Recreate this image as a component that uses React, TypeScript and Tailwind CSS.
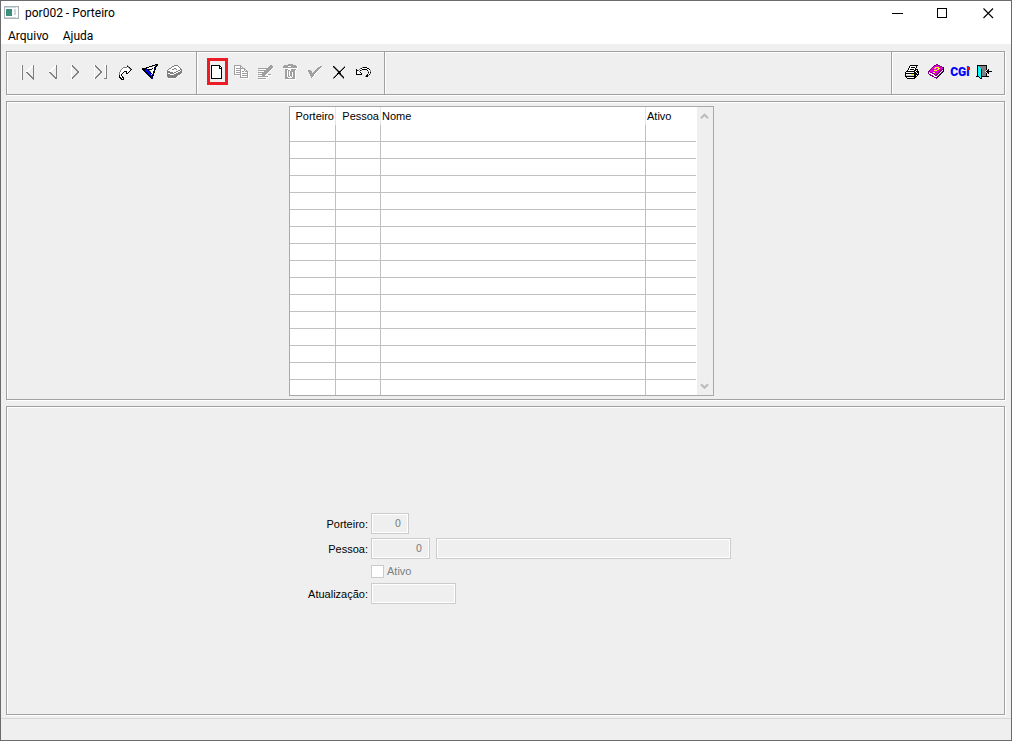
import type { ReactNode } from "react";

// One character per pixel, "." is transparent
const palette: Record<string, string> = {
    k: "#000000",
    g: "#808080",
    a: "#a0a0a0",
    l: "#c4c4c4",
    w: "#ffffff",
    b: "#0000ff",
    n: "#000080",
    c: "#00ffff",
    m: "#e000e0",
    p: "#800080",
    y: "#ffff00",
};

const icons = {
    first: [
        "",
        "",
        "...wg.........wg",
        "...wg........wwg",
        "...wg.......ww.g",
        "...wg......ww..g",
        "...wg.....ww...g",
        "...wg....ww....g",
        "...wg...ww.....g",
        "...wg...gg.....g",
        "...wg....gg....g",
        "...wg.....gg...g",
        "...wg......gg..g",
        "...wg.......gg.g",
        "...wg........ggg",
        "...wg.........gg",
        "....g..........g",
    ],
    prev: [
        "",
        "",
        "............wg",
        "...........wwg",
        "..........ww.g",
        ".........ww..g",
        "........ww...g",
        ".......ww....g",
        "......ww.....g",
        "......gg.....g",
        ".......gg....g",
        "........gg...g",
        ".........gg..g",
        "..........gg.g",
        "...........ggg",
        "............gg",
    ],
    next: [
        "",
        "",
        "....wg",
        "....wgg",
        "....w.gg",
        "....w..gg",
        "....w...gg",
        "....w....gg",
        "....w.....gg",
        "....w.....gg",
        "....w....gg",
        "....w...gg",
        "....w..gg",
        "....w.gg",
        "....wgg",
        "....wg",
    ],
    last: [
        "",
        "",
        "..wg........wwg",
        "..wgg........wg",
        "..w.gg.......wg",
        "..w..gg......wg",
        "..w...gg.....wg",
        "..w....gg....wg",
        "..w.....gg...wg",
        "..w.....gg...wg",
        "..w....gg....wg",
        "..w...gg.....wg",
        "..w..gg......wg",
        "..w.gg.......wg",
        "..wgg........wg",
        "..wg........ggg",
    ],
    redo: [
        "",
        "",
        "..........g",
        "..........kg",
        "......ggggwgk",
        ".....gwwwwwwgk",
        "....gwwwwwwwwgk",
        "...gwwwwwwwwwk",
        "...gwwwkkkwwk",
        "..gwwwk..kwk",
        "..gwwk...kk",
        "..gwk",
        "..kwk",
        "..kwwk",
        "..kkwkk",
        "...kkwk",
        "....kkk",
    ],
    filter: [
        "",
        "..............kkk",
        "...........kkkgkn",
        "........kkkgwwkk",
        ".....kkkwwwwwkk",
        ".kkkkkwwwwwkwnk",
        ".kkkbbkkkkkwwkk",
        "..kkbbbkgwwwwk",
        "...kkbbbkgwwnk",
        "....kkbbbkwwkk",
        ".....kkbbbkwk",
        "......kkbbwnk",
        ".......kkbbkk",
        "........kkbk",
        ".........kbn",
        "..........nn",
    ],
    eraser: [
        "",
        "",
        "........gggg",
        "......ggwwwwg",
        ".....gwwwwwwwg",
        "...ggwwwggwwwwg",
        "..gwwwgg..gwwwgg",
        ".gwwwwwwwwwwggwg",
        ".gggwwwwwwggwwgg",
        ".ggggggwggwwgggg",
        ".gwwggggwwggggg",
        ".gggwwwwggggggw",
        ".gggggggggggww",
        ".ggggggggggw",
        "..ggggggggw",
        "...wwwwwww",
    ],
    blank: [
        "",
        "",
        "...kkkkkkkkk",
        "...kwwwwwwwkk",
        "...kwwwwwwwkwk",
        "...kwwwwwwwkkk",
        "...kwwwwwwwwwk",
        "...kwwwwwwwwwk",
        "...kwwwwwwwwwk",
        "...kwwwwwwwwwk",
        "...kwwwwwwwwwk",
        "...kwwwwwwwwwk",
        "...kwwwwwwwwwk",
        "...kwwwwwwwwwk",
        "...kwwwwwwwwwk",
        "...kkkkkkkkkkk",
    ],
    copy: [
        "",
        "",
        ".aaaaaaa",
        ".awwwwwaa",
        ".awwwwwawa",
        ".awaaaaaaaaa",
        ".awwwwwawwwaaw",
        ".awaaaaawwwawa",
        ".awwwwwawaawaaa",
        ".awaaaaawwwwwwaw",
        ".awwwwwawaaaaaaw",
        ".aaaaaaawwwwwwaw",
        "..wwwwwawaaaaaaw",
        ".......awwwwwwaw",
        ".......aaaaaaaaw",
        "........wwwwwwww",
    ],
    edit: [
        "",
        "",
        ".............aa",
        "............aaaa",
        "...........aaaaaw",
        ".aaaaaaaaaaaaaaw",
        "..wwwwwwwaaaaaw",
        ".aaaaaaaaaaaaw",
        "..wwwwwaaaaaw",
        ".aaaaaaaaaaw",
        "..wwwaaaaaw",
        ".aaaaaaaawwaaa",
        "..wwwaaawwwwwww",
        ".aaaaaaaaaaw",
        "..wwwwwwwwww",
        ".aaaaaaaaw",
        "..wwwwwwww",
    ],
    trash: [
        "",
        "......aaaaa",
        "..aaaaaaaaaaaa",
        ".aaaaawwwaaaaaaw",
        ".aaaaaaaaaaaaaaw",
        "..wwwwwwwwwwwwww",
        "...aaawwwaaaaaw",
        "...aawaawaaaaw",
        "...aawawaaaaaw",
        "...aawawaawaaw",
        "...aawawaawaaw",
        "...aawawaawaaw",
        "...aawawaawaaw",
        "...aawaawawaaw",
        "...aaawwwwaaaw",
        "...aaaaaaaaaaw",
        "....wwwwwwwwww",
    ],
    check: [
        "",
        "",
        "",
        "..............aa",
        "............aaaw",
        "...........aaaw",
        "..........aaaw",
        "..aaa....aaaw",
        "..aaaa..aaaw",
        "...aaa.aaaw",
        "...aaaaaaw",
        "....aaaaw",
        "....aaaaw",
        ".....aaw",
        ".....aw",
    ],
    cancel: [
        "",
        "",
        "",
        "..kg.........g",
        "..gkg.......gk",
        "...gkg.....gk",
        "....gkg...gk",
        ".....gkg.gk",
        "......gkkk",
        ".......kkg",
        "......kkkk",
        ".....gk.gkg",
        "....gk...gkg",
        "...gk.....gkg",
        "..gk.......gk",
        "..g.........g",
    ],
    undo: [
        "",
        "",
        "",
        "",
        ".......gkkkk",
        ".....gkwwwwwkk",
        ".k..gwwkkkkkwwk",
        ".kkgwkg.....kwwg",
        ".kwwg........gwg",
        ".kwwwk.......kwk",
        ".kwwwwk......gwg",
        ".kkkkkk.....kwk",
        "...........kkg",
        "..........gkk",
    ],
    print: [
        "",
        "",
        "......kkkkkkkk",
        ".....kwwwwwwk",
        ".....kwkkkkwk",
        "....kwwwwwwk",
        "....kwkkkkwkkk",
        "...kwwwwwwkkwk",
        "..kkkkkkkkkwkkk",
        ".kwwwwwwwwkkwkk",
        ".kkkkkkkkkkkkwk",
        ".kwwwwwyywkkkkk",
        ".kllllllllkkwk",
        ".kkkkkkkkkkkk",
        "..kwwwwwwwkk",
        "...kkkkkkkk",
    ],
    help: [
        "",
        "........pp",
        "......ppmmpp",
        ".....pmmmmmmpp",
        "....pmmyyyymmmpk",
        "...pmmyymmyymmmk",
        "..pmmmmmmyymmppk",
        ".pmmmmyyymmmppwk",
        "ppmmmmmmmmmppwpk",
        "pwppmyymmmppwpk",
        "pwwwppmmmppwpk",
        ".ppwwwpmppwpk",
        "..pppwwppwpk",
        "....ppwwwpk",
        "......pppk",
        "........p",
    ],
    exit: [
        "",
        "",
        "..kkkkkkkkkk",
        "..kcgggggggk",
        "..kccggggggk",
        "..kcccgggggk",
        "..kccckggggk.k",
        "..kccckgggg.kk",
        "..kccckggg.kkkkkk",
        "..kccckgggg.kk",
        "..kccckggggk.k",
        "..kccckggggk",
        "..kccckggggk",
        ".kkkcckkkkkkkk",
        "....kck",
        ".....kk",
    ],
    app: [
        "",
        "aaaaaaaaaaaaaaa",
        "alllllllllllwla",
        "awwwwwwwwwwwwwa",
        "awggggggwwllwwa",
        "awgggggnwwllwwa",
        "awggggggwwllwwa",
        "awggggggwwllwwa",
        "awggggggwwllwwa",
        "awggggggwwllwwa",
        "awggggggwwwwwwa",
        "awwwwwwwwwwwwwa",
        "alllllllllllwla",
        "aaaaaaaaaaaaaaa",
    ],
};

type IconName = keyof typeof icons;

function PixelIcon({ name, colors = palette }: { name: IconName; colors?: Record<string, string> }) {
    return (
        <svg
            className="h-[17px] w-[17px] shrink-0"
            viewBox="0 0 17 17"
            shapeRendering="crispEdges"
            aria-hidden="true"
        >
            {icons[name].flatMap((row, y) =>
                [...row].map((char, x) =>
                    char === "." ? null : (
                        <rect key={`${x}-${y}`} x={x} y={y} width="1" height="1" fill={colors[char]} />
                    )
                )
            )}
        </svg>
    );
}

const appColors = { ...palette, g: "#3f8f80", n: "#3f6fa8", a: "#a9b4b8", l: "#cfd8dc" };

interface ToolButtonProps {
    label: string;
    highlighted?: boolean;
    children: ReactNode;
}

function ToolButton({ label, highlighted, children }: ToolButtonProps) {
    return (
        <button
            type="button"
            title={label}
            aria-label={label}
            className={`flex h-[27px] w-[21px] shrink-0 items-center justify-center pr-[2px] ${
                highlighted ? "shadow-[inset_0_0_0_3px_#ed1c24]" : ""
            }`}
        >
            {children}
        </button>
    );
}

const navigation: { icon: IconName; label: string }[] = [
    { icon: "first", label: "Primeiro" },
    { icon: "prev", label: "Anterior" },
    { icon: "next", label: "Próximo" },
    { icon: "last", label: "Último" },
    { icon: "redo", label: "Ir para" },
    { icon: "filter", label: "Filtrar" },
    { icon: "eraser", label: "Limpar filtro" },
];

const editing: { icon: IconName; label: string }[] = [
    { icon: "blank", label: "Novo" },
    { icon: "copy", label: "Copiar" },
    { icon: "edit", label: "Alterar" },
    { icon: "trash", label: "Excluir" },
    { icon: "check", label: "Confirmar" },
    { icon: "cancel", label: "Cancelar" },
    { icon: "undo", label: "Desfazer" },
];

const etched = "border border-[#a0a0a0] shadow-[1px_1px_0_#fff,inset_1px_1px_0_#fff]";
const field =
    "h-[21px] border border-[#cccccc] bg-[#efefef] px-[7px] text-right font-['DejaVu_Sans',sans-serif] text-[10px] text-[#808080] shadow-[inset_0_0_0_1px_#fff] outline-none";

function TitleBar() {
    return (
        <header className="bg-white font-[Roboto,sans-serif] text-xs text-black">
            <div className="flex h-6 items-center">
                <div className="flex flex-1 items-center gap-1 pl-[3px]">
                    <PixelIcon name="app" colors={appColors} />
                    <h1>por002 - Porteiro</h1>
                </div>
                <div className="flex">
                    <button type="button" aria-label="Minimizar" className="flex w-[46px] justify-center">
                        <svg className="size-[11px]" viewBox="0 0 11 11" shapeRendering="crispEdges">
                            <path d="M0 5.5h11" stroke="#000" />
                        </svg>
                    </button>
                    <button type="button" aria-label="Maximizar" className="flex w-[45px] justify-center">
                        <svg className="size-[11px]" viewBox="0 0 11 11" shapeRendering="crispEdges">
                            <path d="M.5 .5h9v9h-9z" fill="none" stroke="#000" />
                        </svg>
                    </button>
                    <button type="button" aria-label="Fechar" className="flex w-[46px] justify-center">
                        <svg className="size-[11px]" viewBox="0 0 11 11">
                            <path d="M.5 .5l9.500 9.500M10 .5l-9.500 9.500" stroke="#000" strokeWidth="1.1" />
                        </svg>
                    </button>
                </div>
            </div>
            <nav className="flex h-[19px] items-end gap-[14px] pl-[7px]">
                <button type="button">Arquivo</button>
                <button type="button">Ajuda</button>
            </nav>
        </header>
    );
}

function Toolbar() {
    return (
        <div role="toolbar" className={`flex ${etched}`}>
            <div className="flex w-[190px] justify-between border-r border-[#a0a0a0] pt-[6px] pr-[10px] pb-[9px] pl-[10px] shadow-[1px_0_0_#fff]">
                {navigation.map(({ icon, label }) => (
                    <ToolButton key={icon} label={label}>
                        <PixelIcon name={icon} />
                    </ToolButton>
                ))}
            </div>
            <div className="flex w-[188px] justify-between border-r border-[#a0a0a0] pt-[6px] pr-[9px] pb-[9px] pl-[10px] shadow-[1px_0_0_#fff]">
                {editing.map(({ icon, label }) => (
                    <ToolButton key={icon} label={label} highlighted={icon === "blank"}>
                        <PixelIcon name={icon} />
                    </ToolButton>
                ))}
            </div>
            <div className="flex-1" />
            <div className="flex w-[113px] justify-between border-l border-[#a0a0a0] pt-[6px] pr-[9px] pb-[9px] pl-[11px] shadow-[inset_1px_0_0_#fff]">
                <ToolButton label="Imprimir">
                    <PixelIcon name="print" />
                </ToolButton>
                <ToolButton label="Ajuda">
                    <PixelIcon name="help" />
                </ToolButton>
                <ToolButton label="CGi">
                    <span className="relative font-[Roboto,sans-serif] text-xs font-black text-[#0000ff]">
                        CGi
                        <span className="absolute top-[3px] right-0 size-[3px] bg-[#ff0000]" />
                    </span>
                </ToolButton>
                <ToolButton label="Sair">
                    <PixelIcon name="exit" />
                </ToolButton>
            </div>
        </div>
    );
}

function DoormenGrid() {
    return (
        <div className="flex border border-[#a9a9a9] bg-white">
            <table className="w-[406px] table-fixed border-separate border-spacing-0">
                <colgroup>
                    <col className="w-[46px]" />
                    <col className="w-[45px]" />
                    <col className="w-[265px]" />
                    <col className="w-[50px]" />
                </colgroup>
                <thead>
                    <tr className="h-[18px] leading-4">
                        <th className="border-r border-[#e6e6e6] p-0 pr-px text-right font-normal">Porteiro</th>
                        <th className="border-r border-[#e6e6e6] p-0 pr-px text-right font-normal">Pessoa</th>
                        <th className="border-r border-[#e6e6e6] p-0 pl-px text-left font-normal">Nome</th>
                        <th className="p-0 pl-px text-left font-normal">Ativo</th>
                    </tr>
                </thead>
                <tbody>
                    {Array.from({ length: 16 }, (_, row) => (
                        <tr key={row} className="group h-[17px] last:h-[15px]">
                            {[0, 1, 2, 3].map((col) => (
                                <td
                                    key={col}
                                    className="border-r border-b border-[#c0c0c0] p-0 group-last:border-b-0 last:border-r-0"
                                />
                            ))}
                        </tr>
                    ))}
                </tbody>
            </table>
            <div className="ml-px flex w-4 flex-col items-center justify-between bg-[#efefef] py-[5px] pr-px">
                <button type="button" aria-label="Rolar para cima">
                    <svg className="h-2 w-[9px]" viewBox="0 0 9 8">
                        <path d="M1 6.200L4.500 2.700L8 6.200" fill="none" stroke="#bcbcbc" strokeWidth="2.2" />
                    </svg>
                </button>
                <button type="button" aria-label="Rolar para baixo">
                    <svg className="h-2 w-[9px]" viewBox="0 0 9 8">
                        <path d="M1 2.300L4.500 5.800L8 2.300" fill="none" stroke="#bcbcbc" strokeWidth="2.2" />
                    </svg>
                </button>
            </div>
        </div>
    );
}

function DoormanForm() {
    return (
        <form className="grid grid-cols-[88px_360px] items-center gap-x-[3px] gap-y-1">
            <label htmlFor="porteiro" className="text-right">
                Porteiro:
            </label>
            <input id="porteiro" type="text" readOnly defaultValue="0" className={`w-[38px] ${field}`} />

            <label htmlFor="pessoa" className="text-right">
                Pessoa:
            </label>
            <div className="flex gap-[6px]">
                <input id="pessoa" type="text" readOnly defaultValue="0" className={`w-[59px] ${field}`} />
                <input type="text" readOnly aria-label="Nome da pessoa" className={`min-w-0 flex-1 ${field}`} />
            </div>

            <label className="col-start-2 flex h-4 items-center gap-[3px] text-[#808080]">
                <input
                    type="checkbox"
                    disabled
                    className="size-[13px] appearance-none border border-[#cccccc] bg-white"
                />
                Ativo
            </label>

            <label htmlFor="atualizacao" className="text-right">
                Atualização:
            </label>
            <input id="atualizacao" type="text" readOnly className={`w-[85px] ${field}`} />
        </form>
    );
}

export default function App() {
    return (
        <div className="flex min-h-screen flex-col border border-[#6b6b6b] bg-[#efefef] font-['Liberation_Sans',Arial,sans-serif] text-[11px] leading-4 text-black">
            <TitleBar />
            <main className="flex flex-1 flex-col gap-[6px] pt-[7px] pr-[6px] pb-[3px] pl-[5px]">
                <Toolbar />
                <section className={`flex justify-center pt-1 pr-2 pb-[3px] ${etched}`}>
                    <DoormenGrid />
                </section>
                <section className={`flex flex-1 items-center justify-center pb-1 ${etched}`}>
                    <DoormanForm />
                </section>
            </main>
            <footer className="h-[22px] border-t border-[#d7d7d7]" />
        </div>
    );
}
